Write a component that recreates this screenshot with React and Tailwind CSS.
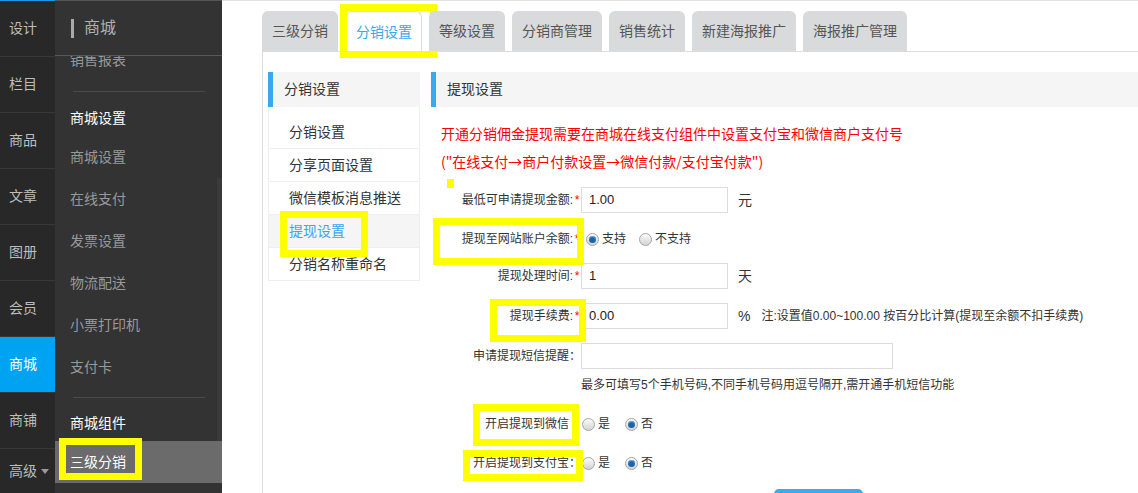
const font = "font-['Liberation_Sans','Noto_Sans_CJK_SC',sans-serif]";

const mainNav = [
  { label: "设计" },
  { label: "栏目" },
  { label: "商品" },
  { label: "文章" },
  { label: "图册" },
  { label: "会员" },
  { label: "商城", active: true },
  { label: "商铺" },
];

const tabs = ["三级分销", "分销设置", "等级设置", "分销商管理", "销售统计", "新建海报推广", "海报推广管理"];
const subMenu = ["分销设置", "分享页面设置", "微信模板消息推送", "提现设置", "分销名称重命名"];

function Mark({ className }) {
  return <span className={`absolute border-[7px] border-[#ffff00] pointer-events-none ${className}`} />;
}

function Radio({ checked }) {
  return (
    <span className="w-[13px] h-[13px] rounded-full border border-[#a5a5a5] bg-linear-to-b from-[#fbfbfb] to-[#d4d4d4] flex items-center justify-center shrink-0">
      {checked && <span className="w-[7px] h-[7px] rounded-full bg-[#1b64a8] shadow-[inset_0_1px_1px_#6fb1ea]" />}
    </span>
  );
}

function RadioGroup({ options, value, gap = "ml-[13px]" }) {
  return (
    <div className="flex items-center">
      {options.map((o, i) => (
        <label key={o} className={`flex items-center ${i > 0 ? gap : ""}`}>
          <Radio checked={o === value} />
          <span className="ml-[3px] text-[12px] text-[#333]">{o}</span>
        </label>
      ))}
    </div>
  );
}

function Row({ label, star, className = "", labelClass = "", children }) {
  return (
    <div className={`relative flex items-center h-[26px] ${className}`}>
      <div className={`w-[150px] text-right text-[12px] text-[#333] ${labelClass}`}>
        {label}
        {star && <span className="inline-block w-[8px] text-center text-[#ff0000]">*</span>}
      </div>
      {children}
    </div>
  );
}

function Input({ value, wide }) {
  return (
    <div className={`${wide ? "w-[312px]" : "w-[147px]"} h-[26px] border border-[#dcdcdc] pl-[7px] text-[13px] text-[#222] leading-[24px]`}>
      {value}
    </div>
  );
}

export default function App() {
  return (
    <div className={`flex w-[1138px] h-[493px] overflow-hidden ${font}`}>
      {/* main nav */}
      <nav className="w-[55px] shrink-0 bg-[#282828] border-t border-[#1c95e6] flex flex-col">
        {mainNav.map((n) => (
          <div
            key={n.label}
            className={`h-[56px] shrink-0 border-b border-[#383838] flex items-center pl-[9px] text-[14px] ${n.active ? "bg-[#00a2f2] text-white" : "text-[#bdbdbd]"}`}
          >
            {n.label}
          </div>
        ))}
        <div className="flex-1 flex items-center pl-[9px] text-[14px] text-[#bdbdbd]">
          高级
          <svg className="ml-[4px] w-[8px] h-[5px]" viewBox="0 0 8 5">
            <path d="M0 0h8L4 5z" fill="#9a9a9a" />
          </svg>
        </div>
      </nav>

      {/* sub nav */}
      <aside className="relative w-[167px] shrink-0 bg-[#333] border-t border-[#555] flex flex-col">
        <div className="h-[55px] shrink-0 border-b border-[#585858] flex items-center pl-[16px]">
          <span className="w-[3px] h-[19px] bg-[#aaa]" />
          <span className="ml-[10px] text-[16px] text-[#b0b0b0]">商城</span>
        </div>
        <div className="flex-1 overflow-hidden">
          <div className="-mt-[17px]">
            <div className="h-[42px] flex items-center pl-[15px] text-[14px] text-[#999]">销售报表</div>
            <div className="pt-[10px] pb-[9px] pl-[18px] pr-[17px]"><div className="h-px bg-[#4a4a4a]" /></div>
            <div className="h-[35px] flex items-center pl-[15px] text-[14px] text-white">商城设置</div>
            {["商城设置", "在线支付", "发票设置", "物流配送", "小票打印机", "支付卡"].map((t) => (
              <div key={t} className="h-[42px] flex items-center pl-[15px] text-[14px] text-[#999]">{t}</div>
            ))}
            <div className="pt-[9px] pb-[8px] pl-[18px] pr-[17px]"><div className="h-px bg-[#4a4a4a]" /></div>
            <div className="h-[35px] flex items-center pl-[15px] text-[14px] text-white">商城组件</div>
            <div className="relative h-[42px] flex items-center pl-[15px] text-[14px] text-white bg-[#6b6b6b]">
              三级分销
              <Mark className="left-[4px] -top-[3px] w-[83px] h-[42px]" />
            </div>
          </div>
        </div>
        <span className="absolute right-0 top-[177px] bottom-[52px] w-[5px] bg-[#3a3a3a]" />
      </aside>

      {/* content */}
      <main className="flex-1 bg-white border-t border-[#e3e3e3] pl-[40px] pt-[10px] flex flex-col">
        <div className="flex items-end h-[41px] border-b border-[#dcdcdc]">
          {tabs.map((t, i) => {
            const active = i === 1;
            return (
              <div
                key={t}
                className={`relative rounded-t-[6px] text-[14px] leading-[40px] ${
                  active
                    ? "bg-white border border-b-0 border-[#dcdcdc] -mb-px h-[41px] px-[9px] text-[#3aa6ee] mr-[7px]"
                    : `h-[40px] px-[10px] bg-[#d9dadb] text-[#555] ${i === 0 ? "mr-[8px]" : "mr-[7px]"}`
                }`}
              >
                {t}
                {active && <Mark className="-left-[7px] -top-[8px] w-[97px] h-[54px]" />}
              </div>
            );
          })}
        </div>

        <div className="flex-1 border-l border-[#dcdcdc] pt-[20px] pl-[5px] flex gap-[11px]">
          {/* left panel */}
          <div className="w-[152px] shrink-0 self-start">
            <div className="h-[35px] bg-[#f5f5f5] border-l-[5px] border-[#3aa8f0] pl-[11px] text-[14px] leading-[35px] text-[#333]">分销设置</div>
            <div className="border-x border-[#eee] pt-[9px]">
              {subMenu.map((m) => {
                const active = m === "提现设置";
                return (
                  <div
                    key={m}
                    className={`relative h-[33px] border-b border-[#eee] pl-[20px] text-[14px] leading-[32px] ${active ? "bg-[#f5f5f5] text-[#3aa6ee]" : "text-[#333]"}`}
                  >
                    {m}
                    {active && <Mark className="left-[11px] -top-[4px] w-[88px] h-[46px]" />}
                  </div>
                );
              })}
            </div>
          </div>

          {/* right panel */}
          <div className="flex-1 flex flex-col">
            <div className="h-[35px] bg-[#f5f5f5] border-l-[5px] border-[#3aa8f0] pl-[11px] text-[14px] leading-[35px] text-[#333]">提现设置</div>
            <div className="pt-[12px] pl-[10px] text-[14px] leading-[28px] text-[#ff0000] font-['Noto_Sans_CJK_SC','Liberation_Sans',sans-serif]">
              <p>开通分销佣金提现需要在商城在线支付组件中设置支付宝和微信商户支付号</p>
              <p>("在线支付→商户付款设置→微信付款/支付宝付款")</p>
            </div>

            <div className="relative flex flex-col">
              <span className="absolute left-[16px] top-[4px] w-[7px] h-[9px] bg-[#ffff00]" />

              <Row label="最低可申请提现金额:" star className="mt-[12px]">
                <Input value="1.00" />
                <span className="ml-[10px] text-[14px] text-[#333]">元</span>
              </Row>

              <Row label="提现至网站账户余额:" star className="mt-[13px]">
                <div className="ml-[5px]">
                  <RadioGroup options={["支持", "不支持"]} value="支持" />
                </div>
                <Mark className="left-[2px] -top-[8px] w-[151px] h-[47px]" />
              </Row>

              <Row label="提现处理时间:" star className="mt-[11px]">
                <Input value="1" />
                <span className="ml-[10px] text-[14px] text-[#333]">天</span>
              </Row>

              <Row label="提现手续费:" star className="mt-[14px]">
                <Input value="0.00" />
                <span className="ml-[10px] text-[14px] text-[#333]">%</span>
                <span className="ml-[11px] text-[12px] text-[#333]">注:设置值0.00~100.00 按百分比计算(提现至余额不扣手续费)</span>
                <Mark className="left-[59px] -top-[4px] w-[96px] h-[43px]" />
              </Row>

              <Row label="申请提现短信提醒：" className="mt-[14px]">
                <Input wide />
              </Row>
              <div className="mt-[6px] pl-[150px] text-[12px] leading-[20px] text-[#333]">
                最多可填写5个手机号码,不同手机号码用逗号隔开,需开通手机短信功能
              </div>

              <Row label="开启提现到微信" labelClass="pr-[12px]" className="mt-[16px]">
                <div className="ml-px">
                  <RadioGroup options={["是", "否"]} value="否" gap="ml-[15px]" />
                </div>
                <Mark className="left-[42px] -top-[7px] w-[106px] h-[42px]" />
              </Row>

              <Row label="开启提现到支付宝：" className="mt-[13px]">
                <div className="ml-px">
                  <RadioGroup options={["是", "否"]} value="否" gap="ml-[15px]" />
                </div>
                <Mark className="left-[32px] top-0 w-[120px] h-[31px]" />
              </Row>

              <div className="mt-[13px] ml-[343px] w-[89px] h-[32px] rounded-[5px] bg-[#3aabef]" />
            </div>
          </div>
        </div>
      </main>
    </div>
  );
}
